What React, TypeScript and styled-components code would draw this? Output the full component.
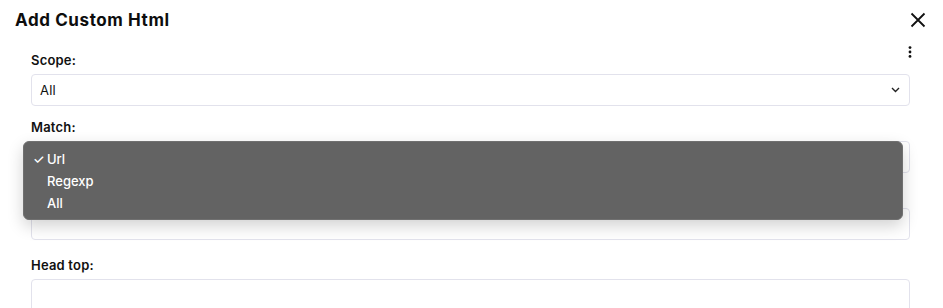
import React from 'react'
import styled, { createGlobalStyle } from 'styled-components'

const GlobalStyle = createGlobalStyle`
    html, body {
        margin: 0;
        padding: 0;
        background: #ffffff;
    }
    body {
        font-family: Inter, "Noto Sans", sans-serif;
        color: #111111;
    }
`

const StyledModal = styled.div`
    width: 943px;
    height: 308px;
    overflow: hidden;
    background: #ffffff;
`

const StyledHeader = styled.div`
    display: flex;
    align-items: center;
    justify-content: space-between;
    height: 40px;
    padding: 0 17px 0 15px;
`

const StyledTitle = styled.h1`
    margin: 0;
    font-size: 17px;
    font-weight: 700;
    letter-spacing: 0.6px;
    color: #0d0d0d;
`

const StyledIconButton = styled.button`
    display: flex;
    align-items: center;
    justify-content: center;
    padding: 0;
    border: none;
    background: transparent;
    cursor: pointer;
`

const StyledBody = styled.div`
    position: relative;
    padding: 10px 33px 0 31px;
`

const StyledMenuButton = styled(StyledIconButton)`
    position: absolute;
    top: 5px;
    right: 29px;
    width: 8px;
    height: 14px;
`

const StyledField = styled.div<{ $gap: number }>`
    position: relative;
    margin-bottom: ${(p) => p.$gap}px;
`

const StyledLabel = styled.label`
    display: block;
    min-height: 20px;
    font-size: 13px;
    font-weight: 600;
    letter-spacing: 0.2px;
    line-height: 20px;
    margin-bottom: 4px;
    color: #111111;
`

const StyledSelect = styled.div`
    display: flex;
    align-items: center;
    justify-content: space-between;
    box-sizing: border-box;
    height: 32px;
    padding: 0 9px 0 8px;
    border: 1px solid #e2e2ec;
    border-radius: 4px;
    font-size: 13px;
    letter-spacing: 0.2px;
    color: #111111;
`

const StyledInput = styled.div<{ $height: number }>`
    box-sizing: border-box;
    height: ${(p) => p.$height}px;
    border: 1px solid #e2e2ec;
    border-radius: 4px;
`

const StyledPopup = styled.ul`
    position: absolute;
    top: 24px;
    left: -8px;
    width: 880px;
    box-sizing: border-box;
    margin: 0;
    padding: 6px 0 5px;
    list-style: none;
    background: #636363;
    border: 1px solid #707070;
    border-radius: 6px;
    box-shadow: 0 6px 16px rgba(0, 0, 0, 0.18);
    z-index: 2;
`

const StyledOption = styled.li`
    display: flex;
    align-items: center;
    height: 22px;
    padding-left: 9px;
    font-size: 13px;
    font-weight: 500;
    color: #ffffff;
`

const StyledCheck = styled.span`
    display: inline-block;
    width: 14px;
    font-size: 13px;
`

const Chevron = () => (
    <svg width="9" height="6" viewBox="0 0 9 6" fill="none">
        <path d="M1 1l3.5 3.5L8 1" stroke="#222" strokeWidth="1.4" />
    </svg>
)

const options = ['Url', 'Regexp', 'All']

const App = () => {
    return (
        <StyledModal>
            <GlobalStyle />
            <StyledHeader>
                <StyledTitle>Add Custom Html</StyledTitle>
                <StyledIconButton aria-label="Close">
                    <svg width="16" height="16" viewBox="0 0 16 16">
                        <path d="M1.5 1.5l13 13M14.5 1.5l-13 13" stroke="#111" strokeWidth="1.8" />
                    </svg>
                </StyledIconButton>
            </StyledHeader>
            <StyledBody>
                <StyledMenuButton aria-label="More">
                    <svg width="4" height="12" viewBox="0 0 4 12">
                        <circle cx="2" cy="1.6" r="1.4" fill="#111" />
                        <circle cx="2" cy="6" r="1.4" fill="#111" />
                        <circle cx="2" cy="10.4" r="1.4" fill="#111" />
                    </svg>
                </StyledMenuButton>
                <StyledField $gap={11}>
                    <StyledLabel>Scope:</StyledLabel>
                    <StyledSelect>
                        <span>All</span>
                        <Chevron />
                    </StyledSelect>
                </StyledField>
                <StyledField $gap={11}>
                    <StyledLabel>Match:</StyledLabel>
                    <StyledSelect>
                        <span />
                        <Chevron />
                    </StyledSelect>
                    <StyledPopup>
                        {options.map((opt, i) => (
                            <StyledOption key={opt}>
                                <StyledCheck>{i === 0 ? '✓' : ''}</StyledCheck>
                                {opt}
                            </StyledOption>
                        ))}
                    </StyledPopup>
                </StyledField>
                <StyledField $gap={15}>
                    <StyledLabel />
                    <StyledInput $height={32} />
                </StyledField>
                <StyledField $gap={0}>
                    <StyledLabel>Head top:</StyledLabel>
                    <StyledInput $height={80} />
                </StyledField>
            </StyledBody>
        </StyledModal>
    )
}

export default App
